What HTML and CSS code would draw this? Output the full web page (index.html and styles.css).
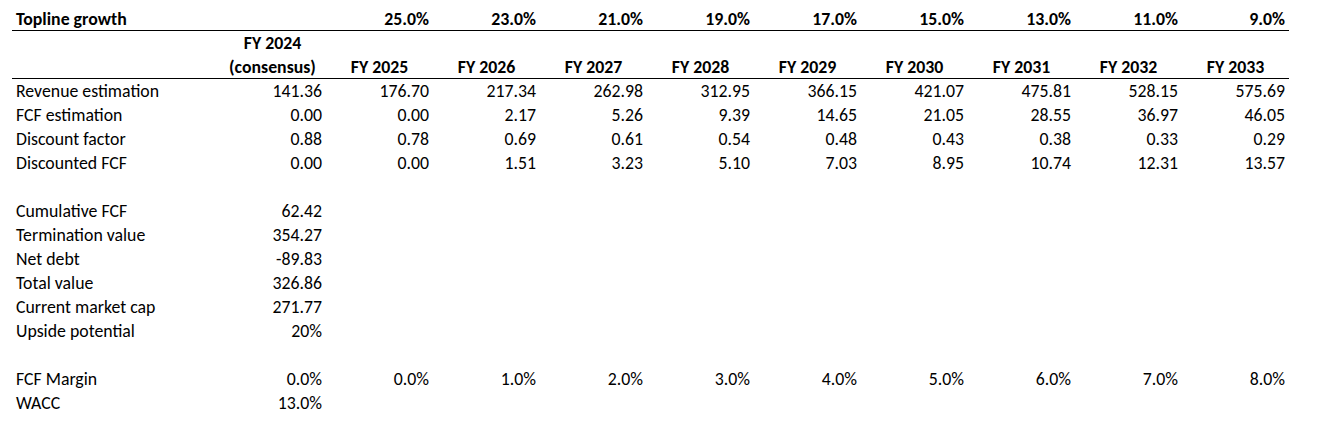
FILE: index.html
```html
<!DOCTYPE html>
<html lang="en">
<head>
<meta charset="utf-8">
<title>DCF model</title>
<link rel="stylesheet" href="styles.css">
</head>
<body>
<div class="sheet">
  <div class="row rule bold">
    <div class="cell label">Topline growth</div>
    <div class="cell"></div>
    <div class="cell num">25.0%</div>
    <div class="cell num">23.0%</div>
    <div class="cell num">21.0%</div>
    <div class="cell num">19.0%</div>
    <div class="cell num">17.0%</div>
    <div class="cell num">15.0%</div>
    <div class="cell num">13.0%</div>
    <div class="cell num">11.0%</div>
    <div class="cell num">9.0%</div>
  </div>
  <div class="row bold">
    <div class="cell label"></div>
    <div class="cell center">FY 2024</div>
  </div>
  <div class="row rule bold">
    <div class="cell label"></div>
    <div class="cell center">(consensus)</div>
    <div class="cell center">FY 2025</div>
    <div class="cell center">FY 2026</div>
    <div class="cell center">FY 2027</div>
    <div class="cell center">FY 2028</div>
    <div class="cell center">FY 2029</div>
    <div class="cell center">FY 2030</div>
    <div class="cell center">FY 2031</div>
    <div class="cell center">FY 2032</div>
    <div class="cell center">FY 2033</div>
  </div>
  <div class="row">
    <div class="cell label">Revenue estimation</div>
    <div class="cell num">141.36</div>
    <div class="cell num">176.70</div>
    <div class="cell num">217.34</div>
    <div class="cell num">262.98</div>
    <div class="cell num">312.95</div>
    <div class="cell num">366.15</div>
    <div class="cell num">421.07</div>
    <div class="cell num">475.81</div>
    <div class="cell num">528.15</div>
    <div class="cell num">575.69</div>
  </div>
  <div class="row">
    <div class="cell label">FCF estimation</div>
    <div class="cell num">0.00</div>
    <div class="cell num">0.00</div>
    <div class="cell num">2.17</div>
    <div class="cell num">5.26</div>
    <div class="cell num">9.39</div>
    <div class="cell num">14.65</div>
    <div class="cell num">21.05</div>
    <div class="cell num">28.55</div>
    <div class="cell num">36.97</div>
    <div class="cell num">46.05</div>
  </div>
  <div class="row">
    <div class="cell label">Discount factor</div>
    <div class="cell num">0.88</div>
    <div class="cell num">0.78</div>
    <div class="cell num">0.69</div>
    <div class="cell num">0.61</div>
    <div class="cell num">0.54</div>
    <div class="cell num">0.48</div>
    <div class="cell num">0.43</div>
    <div class="cell num">0.38</div>
    <div class="cell num">0.33</div>
    <div class="cell num">0.29</div>
  </div>
  <div class="row">
    <div class="cell label">Discounted FCF</div>
    <div class="cell num">0.00</div>
    <div class="cell num">0.00</div>
    <div class="cell num">1.51</div>
    <div class="cell num">3.23</div>
    <div class="cell num">5.10</div>
    <div class="cell num">7.03</div>
    <div class="cell num">8.95</div>
    <div class="cell num">10.74</div>
    <div class="cell num">12.31</div>
    <div class="cell num">13.57</div>
  </div>
  <div class="row"></div>
  <div class="row">
    <div class="cell label">Cumulative FCF</div>
    <div class="cell num">62.42</div>
  </div>
  <div class="row">
    <div class="cell label">Termination value</div>
    <div class="cell num">354.27</div>
  </div>
  <div class="row">
    <div class="cell label">Net debt</div>
    <div class="cell num">-89.83</div>
  </div>
  <div class="row">
    <div class="cell label">Total value</div>
    <div class="cell num">326.86</div>
  </div>
  <div class="row">
    <div class="cell label">Current market cap</div>
    <div class="cell num">271.77</div>
  </div>
  <div class="row">
    <div class="cell label">Upside potential</div>
    <div class="cell num">20%</div>
  </div>
  <div class="row"></div>
  <div class="row">
    <div class="cell label">FCF Margin</div>
    <div class="cell num">0.0%</div>
    <div class="cell num">0.0%</div>
    <div class="cell num">1.0%</div>
    <div class="cell num">2.0%</div>
    <div class="cell num">3.0%</div>
    <div class="cell num">4.0%</div>
    <div class="cell num">5.0%</div>
    <div class="cell num">6.0%</div>
    <div class="cell num">7.0%</div>
    <div class="cell num">8.0%</div>
  </div>
  <div class="row">
    <div class="cell label">WACC</div>
    <div class="cell num">13.0%</div>
  </div>
</div>
</body>
</html>
```

FILE: styles.css
```css
html, body {
  margin: 0;
  padding: 0;
  background: #ffffff;
}

body {
  font-family: Carlito, Calibri, "Open Sans", "Noto Sans", sans-serif;
  font-size: 17.8px;
  color: #000000;
}

.sheet {
  padding: 7px 0 0 12px;
  width: 1277px;
}

.row {
  display: grid;
  grid-template-columns: 207px repeat(10, 107px);
  height: 24px;
  box-sizing: border-box;
  line-height: 24px;
}

.row.rule {
  border-bottom: 1px solid #000000;
}

.bold {
  font-weight: 700;
}

.cell {
  padding: 0 4px;
  white-space: nowrap;
  overflow: hidden;
}

.label {
  text-align: left;
}

.num {
  text-align: right;
}

.center {
  text-align: center;
}
```
